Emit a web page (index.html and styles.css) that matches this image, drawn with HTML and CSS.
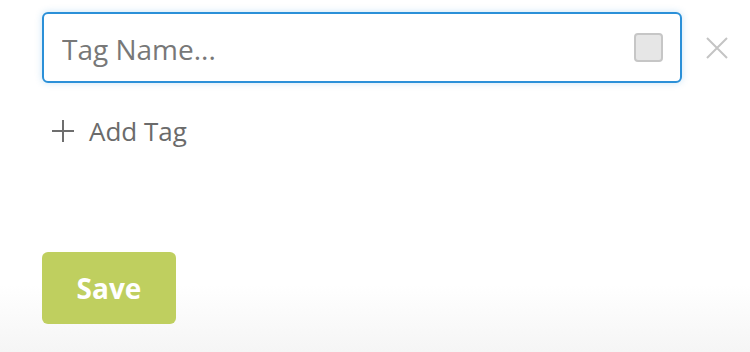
FILE: index.html
```html
<!DOCTYPE html>
<html>
<head>
<meta charset="utf-8">
<link rel="stylesheet" href="styles.css">
</head>
<body>
<div class="page">
  <div class="tag-row">
    <div class="tag-input">
      <input class="tag-field" type="text" placeholder="Tag Name...">
      <span class="tag-check"></span>
    </div>
    <button class="remove-btn" aria-label="Remove">
      <svg width="22" height="22" viewBox="0 0 22 22"><path d="M1 1 L21 21 M21 1 L1 21" stroke="#c4c4c4" stroke-width="2" fill="none"/></svg>
    </button>
  </div>
  <div class="add-tag">
    <svg class="plus" width="22" height="22" viewBox="0 0 22 22"><path d="M11 0 V22 M0 11 H22" stroke="#6e6e6e" stroke-width="2" fill="none"/></svg>
    <span class="add-label">Add Tag</span>
  </div>
  <button class="save-btn">Save</button>
</div>
</body>
</html>
```
FILE: styles.css
```css
html, body {
  margin: 0;
  padding: 0;
  height: 100%;
}
body {
  background: linear-gradient(to bottom, #ffffff 0, #ffffff 285px, #f5f5f5 352px);
  font-family: "Open Sans", "Noto Sans", sans-serif;
}
.page {
  padding: 12px 0 0 42px;
  display: flex;
  flex-direction: column;
  align-items: flex-start;
}
.tag-row {
  display: flex;
  align-items: center;
  gap: 24px;
}
.tag-input {
  box-sizing: border-box;
  width: 640px;
  height: 71px;
  border: 2px solid #2b90d8;
  border-radius: 6px;
  box-shadow: 0 0 7px rgba(43, 144, 216, 0.25);
  background: #fff;
  display: flex;
  align-items: center;
  padding: 0 17px 0 18px;
}
.tag-field {
  flex: 1;
  border: 0;
  outline: none;
  padding: 0;
  margin: 2px 0 0 0;
  font-family: inherit;
  font-size: 28px;
  color: #555;
  background: transparent;
}
.tag-field::placeholder {
  color: #787878;
}
.tag-check {
  box-sizing: border-box;
  width: 29px;
  height: 29px;
  border: 2px solid #c6c6c6;
  border-radius: 4px;
  background: #e6e6e6;
}
.remove-btn {
  border: 0;
  background: none;
  padding: 0;
  width: 22px;
  height: 22px;
  display: block;
}
.remove-btn svg { display: block; }
.add-tag {
  display: flex;
  align-items: center;
  margin: 30px 0 0 10px;
  gap: 15px;
  color: #6b6b6b;
  font-size: 26px;
}
.plus { display: block; }
.save-btn {
  margin-top: 103px;
  width: 134px;
  height: 72px;
  border: 0;
  border-radius: 6px;
  background: #bfcf5f;
  color: #fff;
  font-family: inherit;
  font-weight: 700;
  font-size: 28px;
  padding: 0;
}
```
